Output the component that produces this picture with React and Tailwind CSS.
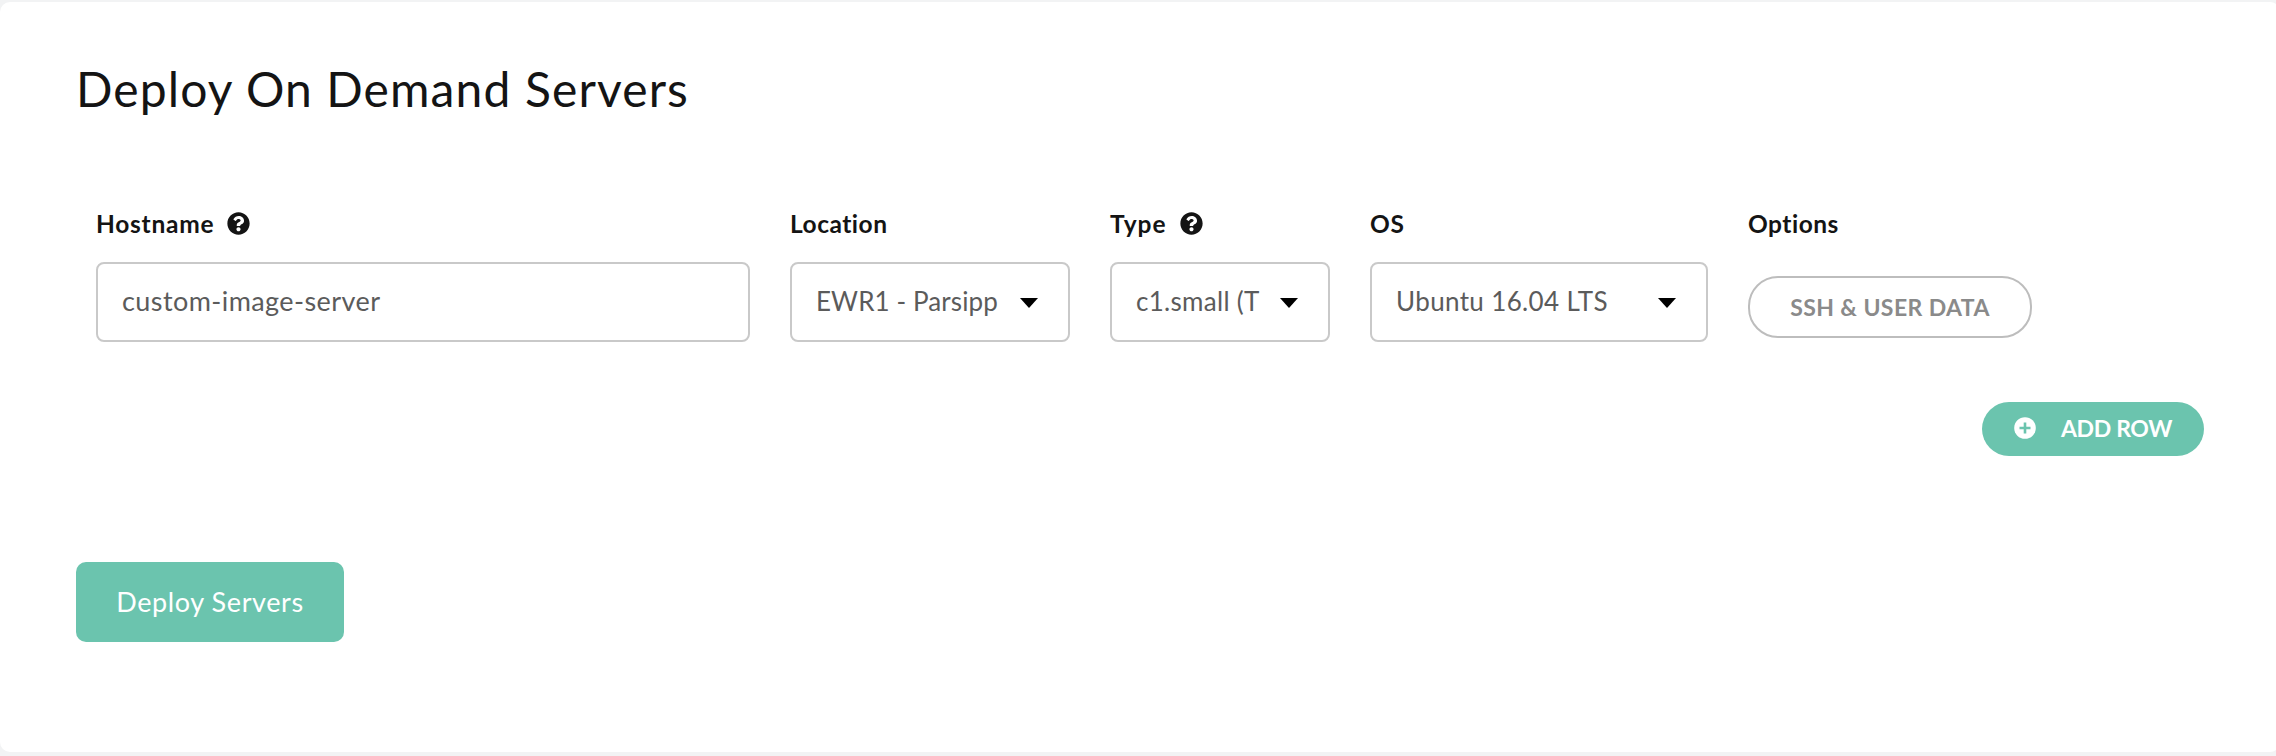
import { FaQuestionCircle } from "react-icons/fa";

function Field({ label, help, className, labelClass, children }) {
  return (
    <div className={`flex flex-col ${className}`}>
      <div className="flex h-[42px] items-center text-[24.5px] font-bold text-[#141414]">
        <span className={`mt-0.5 whitespace-nowrap ${labelClass}`}>{label}</span>
        {help && <FaQuestionCircle className="ml-[13px] size-[23px]" />}
      </div>
      {children}
    </div>
  );
}

function SelectBox({ children, textClass }) {
  return (
    <div className="mt-[18px] flex h-20 items-center justify-between rounded-lg border-2 border-[#c9c9c9] pr-[30px] pl-6 text-[26px] text-[#5b5b5b]">
      <span className={`-mt-px overflow-hidden whitespace-nowrap ${textClass}`}>{children}</span>
      <svg viewBox="0 0 18 10" className="mt-0.5 h-[10px] w-[18px] shrink-0">
        <path d="M0 0h18L9 10z" fill="#000" />
      </svg>
    </div>
  );
}

function PlusIcon() {
  return (
    <svg viewBox="0 0 22 22" className="size-[22px] shrink-0">
      <circle cx="11" cy="11" r="10.8" fill="#fff" />
      <path d="M11 5.5v11M5.5 11h11" stroke="#6bc4ae" strokeWidth="2.6" />
    </svg>
  );
}

export default function App() {
  return (
    <div className="h-[756px] w-[2276px] overflow-hidden bg-[#f2f3f4] pt-0.5 font-['Lato',sans-serif]">
      <main className="flex h-[750px] w-[2280px] flex-col rounded-[10px] bg-white pl-[76px]">
        <h1 className="mt-[55px] h-[67px] text-[48px] leading-[64px] tracking-[1.12px] whitespace-nowrap text-[#141414]">Deploy On Demand Servers</h1>
        <div className="mt-[78px] ml-5 flex gap-10">
          <Field label="Hostname" help className="w-[654px]" labelClass="tracking-[0.75px]">
            <div className="mt-[18px] flex h-20 items-center rounded-lg border-2 border-[#c9c9c9] pl-6 text-[27px] text-[#5b5b5b]">
              <span className="-mt-px tracking-[0.42px]">custom-image-server</span>
            </div>
          </Field>
          <Field label="Location" className="w-[280px]" labelClass="tracking-[0.5px]">
            <SelectBox textClass="tracking-[0.1px]">EWR1 - Parsipp</SelectBox>
          </Field>
          <Field label="Type" help className="w-[220px]" labelClass="tracking-[1px]">
            <SelectBox textClass="tracking-[0.3px]">c1.small (T</SelectBox>
          </Field>
          <Field label="OS" className="w-[338px]" labelClass="tracking-[0.8px]">
            <SelectBox textClass="tracking-[0.36px]">Ubuntu 16.04 LTS</SelectBox>
          </Field>
          <Field label="Options" className="w-[284px]" labelClass="tracking-[0.5px]">
            <button className="mt-8 h-[62px] rounded-[30px] border-2 border-[#bdbdbd] text-[23px] font-bold tracking-[0.4px] whitespace-nowrap text-[#8a8a8a]">
              <span>SSH &amp; USER DATA</span>
            </button>
          </Field>
        </div>
        <button className="mt-[60px] ml-[1906px] flex h-[54px] w-[222px] items-center rounded-[27px] bg-[#6bc4ae] pl-8 text-[23px] font-bold text-white">
          <span className="-mt-[3px]"><PlusIcon /></span>
          <span className="-mt-px ml-[25px] tracking-[-0.35px] whitespace-nowrap">ADD ROW</span>
        </button>
        <button className="mt-[106px] h-20 w-[268px] rounded-[10px] bg-[#6bc4ae] text-[27px] tracking-[0.6px] whitespace-nowrap text-white">
          <span>Deploy Servers</span>
        </button>
      </main>
    </div>
  );
}
